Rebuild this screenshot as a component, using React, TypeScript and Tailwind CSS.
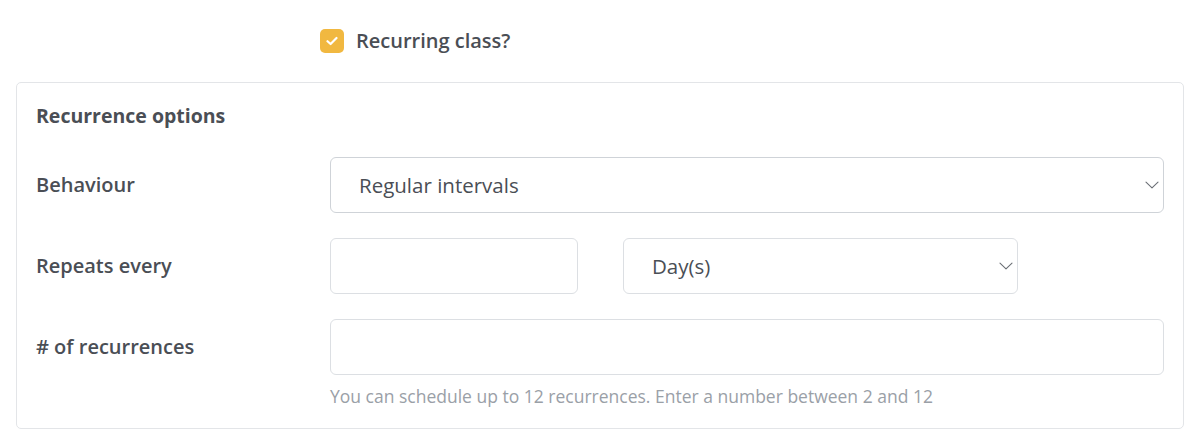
import React, { useState } from 'react';

const Chevron = () => (
    <svg width="14" height="8" viewBox="0 0 14 8" fill="none" className="shrink-0">
        <path d="M1 1.2 L7 6.8 L13 1.2" stroke="#6b6f75" strokeWidth="1.1" strokeLinecap="round" strokeLinejoin="round" />
    </svg>
);

const App = () => {
    const [recurring, setRecurring] = useState(true);

    return (
        <div className="w-[1200px] h-[446px] bg-white text-[#4a4e55] pt-[29px]" style={{ fontFamily: '"Open Sans", "Noto Sans", sans-serif' }}>
            {/* Checkbox */}
            <label className="flex items-center gap-3 pl-[320px] h-6 cursor-pointer" onClick={() => setRecurring(!recurring)}>
                <span className={`w-6 h-6 rounded-[5px] flex items-center justify-center ${recurring ? 'bg-[#f1b840]' : 'border border-gray-300'}`}>
                    {recurring && (
                        <svg width="12" height="10" viewBox="0 0 12 10" fill="none">
                            <path d="M1.5 5.2 L4.6 8 L10.5 2" stroke="white" strokeWidth="2.2" strokeLinecap="round" strokeLinejoin="round" />
                        </svg>
                    )}
                </span>
                <span className="text-[20px] font-semibold leading-6">Recurring class?</span>
            </label>

            {/* Card */}
            <div className="mx-4 mt-[29px] w-[1168px] h-[347px] border border-[#e3e5e8] rounded-[5px] px-[19px] pt-[21px]">
                <h3 className="text-[19.5px] font-bold h-6 leading-6">Recurrence options</h3>

                <div className="mt-[29px] flex items-center">
                    <div className="w-[294px] text-[20px] font-semibold">Behaviour</div>
                    <div className="w-[834px] h-[56px] border border-[#cfd3d8] rounded-[6px] flex items-center justify-between pl-[28px] pr-[4px]">
                        <span className="text-[20.5px]">Regular intervals</span>
                        <Chevron />
                    </div>
                </div>

                <div className="mt-[25px] flex items-center">
                    <div className="w-[294px] text-[20px] font-semibold">Repeats every</div>
                    <div className="w-[248px] h-[56px] border border-[#dcdfe3] rounded-[6px]" />
                    <div className="ml-[45px] w-[395px] h-[56px] border border-[#dcdfe3] rounded-[6px] flex items-center justify-between pl-[28px] pr-[4px]">
                        <span className="text-[20.5px]">Day(s)</span>
                        <Chevron />
                    </div>
                </div>

                <div className="mt-[25px] flex items-center">
                    <div className="w-[294px] text-[20px] font-semibold">{'# of recurrences'}</div>
                    <div className="w-[834px] h-[56px] border border-[#dcdfe3] rounded-[6px]" />
                </div>
                <p className="ml-[294px] mt-[9px] text-[17.5px] leading-6 text-[#9aa0a7]">You can schedule up to 12 recurrences. Enter a number between 2 and 12</p>
            </div>
        </div>
    );
};

export default App;
